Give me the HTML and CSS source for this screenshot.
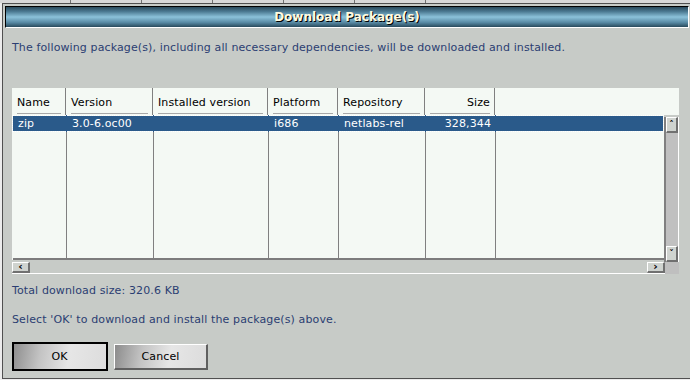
FILE: index.html
```html
<!DOCTYPE html>
<html lang="en">
<head>
  <meta charset="UTF-8">
  <title>Download Package(s)</title>
  <link rel="stylesheet" href="styles.css">
</head>
<body>

<div class="desktop-strip">
  <span class="tab"></span><span class="tab"></span><span class="tab"></span><span class="tab"></span><span class="tab"></span><span class="tab"></span>
</div>

<div class="window">
  <div class="titlebar"><span class="title">Download Package(s)</span></div>

  <div class="content">
    <p class="msg intro">The following package(s), including all necessary dependencies, will be downloaded and installed.</p>

    <div class="list">
      <div class="list-head">
        <div class="hcell c-name"><span>Name</span></div>
        <div class="hcell c-ver"><span>Version</span></div>
        <div class="hcell c-inst"><span>Installed version</span></div>
        <div class="hcell c-plat"><span>Platform</span></div>
        <div class="hcell c-repo"><span>Repository</span></div>
        <div class="hcell c-size right"><span>Size</span></div>
        <div class="hcell c-rest"></div>
      </div>

      <div class="list-main">
        <table class="rows">
          <colgroup>
            <col class="c-name"><col class="c-ver"><col class="c-inst"><col class="c-plat"><col class="c-repo"><col class="c-size"><col>
          </colgroup>
          <tr class="selected">
            <td class="first">zip</td>
            <td>3.0-6.oc00</td>
            <td></td>
            <td>i686</td>
            <td>netlabs-rel</td>
            <td class="right">328,344</td>
            <td class="last"></td>
          </tr>
          <tr class="filler">
            <td></td><td></td><td></td><td></td><td></td><td></td><td></td>
          </tr>
        </table>
        <div class="vscroll">
          <div class="sbtn">&#x2c4;</div>
          <div class="sbtn">&#x2c5;</div>
        </div>
      </div>

      <div class="list-foot">
        <div class="hscroll">
          <div class="sbtn wide">&lsaquo;</div>
          <div class="sbtn wide">&rsaquo;</div>
        </div>
        <div class="corner"></div>
      </div>
    </div>

    <p class="msg total">Total download size: 320.6 KB</p>
    <p class="msg confirm">Select 'OK' to download and install the package(s) above.</p>

    <div class="buttons">
      <button class="btn default">OK</button>
      <button class="btn">Cancel</button>
    </div>
  </div>
</div>

</body>
</html>
```

FILE: styles.css
```css
body { margin: 0; background: #ececec; font-family: "DejaVu Sans", sans-serif; font-size: 11px; letter-spacing: 0.12px; }

.desktop-strip { height: 3px; display: flex; background: #d8d8d8; }
.desktop-strip .tab { width: 70px; border-right: 1px solid #707070; }

.window { margin-left: 2px; width: 684px; height: 370px; padding: 2px; border: 1px solid #505050; background: #c7cbc7; display: flex; flex-direction: column; }

.titlebar {
  height: 20px; border-top: 1px solid #000; border-left: 1px solid #000; border-right: 1px solid #fff; border-bottom: 1px solid #fff;
  background: linear-gradient(to bottom, #2a4a5c 0%, #4a7890 22%, #8cc2da 50%, #5688a2 78%, #284a5c 100%);
  display: flex; align-items: center; justify-content: center;
}
.title { color: #fffbe0; font-weight: bold; font-size: 12px; text-shadow: 1px 1px 0 #000; letter-spacing: 0; }

.content { padding: 0 6px 0 7px; display: flex; flex-direction: column; }

.msg { margin: 0; color: #2b3e72; line-height: 14px; }
.intro { margin-top: 13px; }

.list { margin-top: 33px; width: 667px; }
.list-head { display: flex; height: 27px; background: #f4f9f4; }
.hcell { border-right: 1px solid #808080; padding: 8px 4px 0 5px; box-sizing: border-box; color: #000; }
.hcell span { display: block; border-bottom: 1px solid #a8a8a8; padding-bottom: 4px; }
.hcell.c-rest { flex: 1; border-right: none; }
.right { text-align: right; }

.c-name { width: 54px; }
.c-ver { width: 87px; }
.c-inst { width: 115px; }
.c-plat { width: 70px; }
.c-repo { width: 87px; }
.c-size { width: 70px; }

.list-main { display: flex; height: 147px; }
.rows { width: 653px; height: 145px; border-collapse: collapse; table-layout: fixed; background: #f4f9f4; border-bottom: 2px solid #7c7c7c; }
.rows td { border-right: 1px solid #808080; padding: 0 4px 0 5px; white-space: nowrap; overflow: hidden; }
.rows td:last-child { border-right: none; }
.selected td { height: 15px; background: #2a5a8a; color: #fff; border-top: 1px dotted #fff; border-bottom: 1px dotted #fff; border-right-color: #2a5a8a; }
.selected td.first { border-left: 1px dotted #fff; }
.selected td.last { border-right: 1px dotted #fff; }

.vscroll { width: 12px; margin-top: 2px; border-left: 2px solid #808080; border-right: 1px solid #fff; background: #c0c0c0; display: flex; flex-direction: column; justify-content: space-between; }
.sbtn {
  height: 16px; box-sizing: border-box; border-top: 1px solid #fff; border-left: 1px solid #fff; border-right: 2px solid #707070; border-bottom: 2px solid #707070;
  background: #cfd3cf; font-size: 9px; line-height: 13px; text-align: center; color: #000; font-weight: bold; letter-spacing: 0;
}

.list-foot { display: flex; height: 12px; }
.hscroll { width: 653px; display: flex; justify-content: space-between; border-bottom: 1px solid #fff; }
.sbtn.wide { width: 18px; height: 11px; line-height: 8px; font-size: 11px; }
.corner { width: 14px; background: #bfbfbf; }

.total { margin-top: 10px; }
.confirm { margin-top: 15px; }

.buttons { display: flex; gap: 6px; margin-top: 15px; align-items: center; }
.btn {
  width: 94px; height: 26px; font-family: "DejaVu Sans", sans-serif; font-size: 11px; font-weight: normal; color: #000; letter-spacing: 0.12px;
  border-top: 1px solid #fff; border-left: 1px solid #fff; border-right: 2px solid #606060; border-bottom: 2px solid #606060;
  background: linear-gradient(100deg, #8c8c8c 0%, #c4c4c4 30%, #e6e6e6 60%, #dcdcdc 100%);
}
.btn.default { width: 96px; height: 29px; outline: 2px solid #000; outline-offset: -2px; }
```
